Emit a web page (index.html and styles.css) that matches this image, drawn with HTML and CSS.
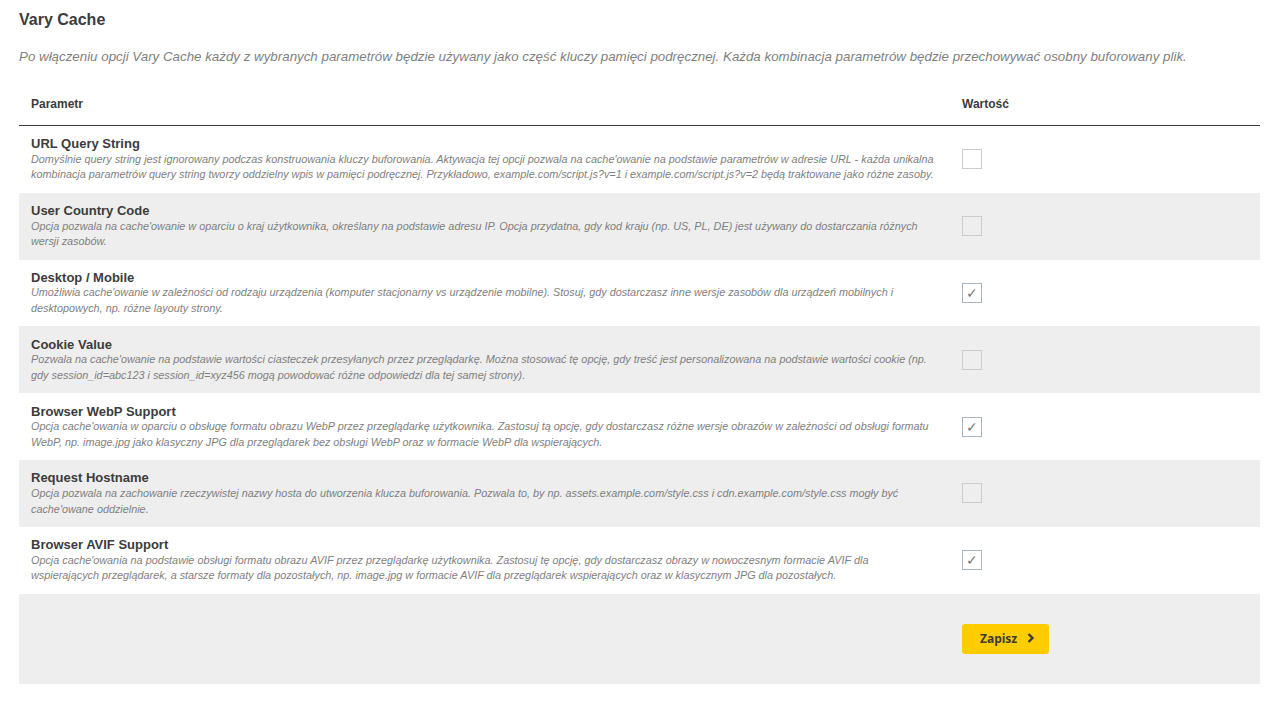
FILE: index.html
```html
<!DOCTYPE html>
<html lang="pl">
<head>
    <meta charset="UTF-8">
    <meta name="viewport" content="width=device-width, initial-scale=1.0">
    <title>Vary Cache</title>
    <link rel="stylesheet" href="styles.css">
</head>
<body>
    <div class="container">
        <h1>Vary Cache</h1>
        <p class="intro">Po włączeniu opcji Vary Cache każdy z wybranych parametrów będzie używany jako część kluczy pamięci podręcznej. Każda kombinacja parametrów będzie przechowywać osobny buforowany plik.</p>

        <table class="params">
            <thead>
                <tr>
                    <th class="col-name">Parametr</th>
                    <th class="col-value">Wartość</th>
                </tr>
            </thead>
            <tbody>
                <tr>
                    <td>
                        <div class="name">URL Query String</div>
                        <div class="desc">Domyślnie query string jest ignorowany podczas konstruowania kluczy buforowania. Aktywacja tej opcji pozwala na cache'owanie na podstawie parametrów w adresie URL - każda unikalna kombinacja parametrów query string tworzy oddzielny wpis w pamięci podręcznej. Przykładowo, example.com/script.js?v=1 i example.com/script.js?v=2 będą traktowane jako różne zasoby.</div>
                    </td>
                    <td><span class="check"></span></td>
                </tr>
                <tr>
                    <td>
                        <div class="name">User Country Code</div>
                        <div class="desc">Opcja pozwala na cache'owanie w oparciu o kraj użytkownika, określany na podstawie adresu IP. Opcja przydatna, gdy kod kraju (np. US, PL, DE) jest używany do dostarczania różnych wersji zasobów.</div>
                    </td>
                    <td><span class="check"></span></td>
                </tr>
                <tr>
                    <td>
                        <div class="name">Desktop / Mobile</div>
                        <div class="desc">Umożliwia cache'owanie w zależności od rodzaju urządzenia (komputer stacjonarny vs urządzenie mobilne). Stosuj, gdy dostarczasz inne wersje zasobów dla urządzeń mobilnych i desktopowych, np. różne layouty strony.</div>
                    </td>
                    <td><span class="check on">✓</span></td>
                </tr>
                <tr>
                    <td>
                        <div class="name">Cookie Value</div>
                        <div class="desc">Pozwala na cache'owanie na podstawie wartości ciasteczek przesyłanych przez przeglądarkę. Można stosować tę opcję, gdy treść jest personalizowana na podstawie wartości cookie (np. gdy session_id=abc123 i session_id=xyz456 mogą powodować różne odpowiedzi dla tej samej strony).</div>
                    </td>
                    <td><span class="check"></span></td>
                </tr>
                <tr>
                    <td>
                        <div class="name">Browser WebP Support</div>
                        <div class="desc">Opcja cache'owania w oparciu o obsługę formatu obrazu WebP przez przeglądarkę użytkownika. Zastosuj tą opcję, gdy dostarczasz różne wersje obrazów w zależności od obsługi formatu WebP, np. image.jpg jako klasyczny JPG dla przeglądarek bez obsługi WebP oraz w formacie WebP dla wspierających.</div>
                    </td>
                    <td><span class="check on">✓</span></td>
                </tr>
                <tr>
                    <td>
                        <div class="name">Request Hostname</div>
                        <div class="desc">Opcja pozwala na zachowanie rzeczywistej nazwy hosta do utworzenia klucza buforowania. Pozwala to, by np. assets.example.com/style.css i cdn.example.com/style.css mogły być cache'owane oddzielnie.</div>
                    </td>
                    <td><span class="check"></span></td>
                </tr>
                <tr>
                    <td>
                        <div class="name">Browser AVIF Support</div>
                        <div class="desc">Opcja cache'owania na podstawie obsługi formatu obrazu AVIF przez przeglądarkę użytkownika. Zastosuj tę opcję, gdy dostarczasz obrazy w nowoczesnym formacie AVIF dla wspierających przeglądarek, a starsze formaty dla pozostałych, np. image.jpg w formacie AVIF dla przeglądarek wspierających oraz w klasycznym JPG dla pozostałych.</div>
                    </td>
                    <td><span class="check on">✓</span></td>
                </tr>
                <tr class="actions">
                    <td></td>
                    <td>
                        <button class="save-btn">Zapisz
                            <svg class="chevron" width="8" height="10" viewBox="0 0 8 10"><path d="M1.5 1l4 4-4 4" fill="none" stroke="currentColor" stroke-width="2.4"/></svg>
                        </button>
                    </td>
                </tr>
            </tbody>
        </table>
    </div>
</body>
</html>
```

FILE: styles.css
```css
* {
    margin: 0;
    padding: 0;
    box-sizing: border-box;
}

body {
    font-family: 'Liberation Sans', Arial, sans-serif;
    background: #fff;
    color: #3c3c3c;
}

.container {
    padding: 11px 12px 0 19px;
}

h1 {
    font-size: 16px;
    line-height: 18px;
    font-weight: 700;
}

.intro {
    margin-top: 19px;
    font-size: 13.33px;
    line-height: 18px;
    font-style: italic;
    color: #7f7f7f;
}

.params {
    width: 100%;
    margin-top: 20px;
    border-collapse: separate;
    border-spacing: 0;
    table-layout: fixed;
}

.params th {
    height: 40px;
    padding: 0 12px 4px;
    text-align: left;
    font-size: 12px;
    border-bottom: 1px solid #3c3c3c;
}

.col-value {
    width: 310px;
}

.params td {
    height: 66.83px;
    padding: 10.25px 12px 0;
    vertical-align: top;
}

.params tbody tr:nth-child(even) {
    background: #eee;
}

.name {
    font-size: 13px;
    line-height: 15px;
    font-weight: 700;
}

.desc {
    margin-top: 0.5px;
    font-size: 10.84px;
    line-height: 15.7px;
    font-style: italic;
    color: #7f7f7f;
}

.check {
    display: block;
    width: 20px;
    height: 20px;
    margin-top: 13px;
    border: 1px solid #ccc;
    text-align: center;
    font-size: 14px;
    line-height: 19px;
    color: #777;
}

.check.on {
    border-color: #a9b4bf;
}

.actions td {
    height: 90px;
}

.save-btn {
    display: flex;
    align-items: center;
    gap: 10px;
    width: 87px;
    height: 30px;
    margin-top: 20px;
    padding: 0 0 2px 18px;
    border: none;
    border-radius: 3px;
    background: #ffcc00;
    color: #3c3c3c;
    font-family: 'Noto Sans', sans-serif;
    font-size: 12px;
    font-weight: 700;
}
```
